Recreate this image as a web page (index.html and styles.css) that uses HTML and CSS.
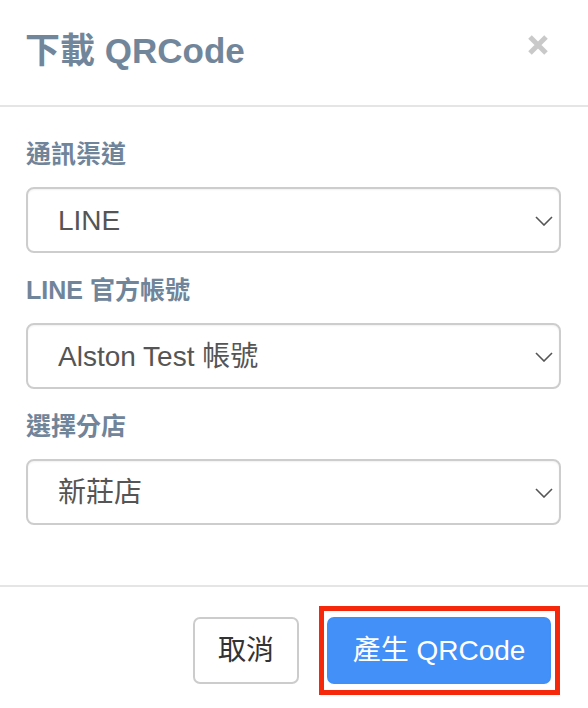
FILE: index.html
```html
<!DOCTYPE html>
<html lang="zh-Hant">
<head>
<meta charset="utf-8">
<title>下載 QRCode</title>
<link rel="stylesheet" href="styles.css">
</head>
<body>
<div class="modal">
  <div class="modal-header">
    <h4 class="modal-title">下載 QRCode</h4>
    <button class="close" type="button" aria-label="Close">
      <svg width="20" height="20" viewBox="0 0 20 20"><path d="M2 2 L18 18 M18 2 L2 18" stroke="#c9c9c9" stroke-width="5" fill="none"/></svg>
    </button>
  </div>
  <div class="modal-body">
    <div class="form-group">
      <label class="label">通訊渠道</label>
      <div class="select-wrap">
        <select class="form-control"><option>LINE</option></select>
        <svg class="chevron" width="18" height="10" viewBox="0 0 18 10"><path d="M1 1 L9 9 L17 1" stroke="#555" stroke-width="1.6" fill="none"/></svg>
      </div>
    </div>
    <div class="form-group">
      <label class="label">LINE 官方帳號</label>
      <div class="select-wrap">
        <select class="form-control"><option>Alston Test 帳號</option></select>
        <svg class="chevron" width="18" height="10" viewBox="0 0 18 10"><path d="M1 1 L9 9 L17 1" stroke="#555" stroke-width="1.6" fill="none"/></svg>
      </div>
    </div>
    <div class="form-group">
      <label class="label">選擇分店</label>
      <div class="select-wrap">
        <select class="form-control"><option>新莊店</option></select>
        <svg class="chevron" width="18" height="10" viewBox="0 0 18 10"><path d="M1 1 L9 9 L17 1" stroke="#555" stroke-width="1.6" fill="none"/></svg>
      </div>
    </div>
  </div>
  <div class="modal-footer">
    <button class="btn btn-default" type="button">取消</button>
    <button class="btn btn-primary" type="button">產生 QRCode</button>
  </div>
</div>
</body>
</html>
```

FILE: styles.css
```css
html, body {
  margin: 0;
  padding: 0;
  background: #fff;
}
body {
  font-family: "Liberation Sans", "Noto Sans CJK TC", sans-serif;
  color: #333;
}
.modal {
  width: 588px;
  height: 708px;
  overflow: hidden;
}
.modal-header {
  height: 105px;
  box-sizing: content-box;
  border-bottom: 2px solid #e5e5e5;
  padding: 0 40px 0 25px;
  display: flex;
  justify-content: space-between;
  align-items: center;
}
.modal-title {
  margin: 0;
  font-size: 35px;
  line-height: 40px;
  font-weight: bold;
  color: #72869b;
  margin-top: -3px;
}
.close {
  align-self: flex-start;
  margin-top: 35px;
  padding: 0;
  border: 0;
  background: none;
  width: 20px;
  height: 20px;
  display: block;
}
.close svg { display: block; }
.modal-body {
  padding: 32px 27px 0 26px;
  height: 478px;
  box-sizing: border-box;
}
.form-group {
  margin-bottom: 22px;
}
.label {
  display: block;
  font-size: 25px;
  line-height: 30px;
  font-weight: bold;
  color: #70849a;
  margin-bottom: 18px;
}
.select-wrap {
  position: relative;
}
.form-control {
  display: block;
  width: 100%;
  height: 66px;
  box-sizing: border-box;
  appearance: none;
  -webkit-appearance: none;
  border: 2px solid #cdcdcd;
  border-radius: 8px;
  background: #fff;
  padding: 0 50px 0 30px;
  font-family: "Liberation Sans", "Noto Sans CJK TC", sans-serif;
  font-size: 28px;
  color: #555;
  box-shadow: inset 0 1px 2px rgba(0,0,0,0.06);
}
.chevron {
  position: absolute;
  right: 8px;
  top: 29px;
}
.modal-footer {
  border-top: 2px solid #e5e5e5;
  padding: 30px 37px 0 0;
  display: flex;
  justify-content: flex-end;
  align-items: flex-start;
  gap: 28px;
}
.btn {
  height: 67px;
  box-sizing: border-box;
  border-radius: 7px;
  font-family: "Liberation Sans", "Noto Sans CJK TC", sans-serif;
  font-size: 28px;
  line-height: 1;
  padding: 0;
  display: flex;
  align-items: center;
  justify-content: center;
}
.btn-default {
  width: 106px;
  border: 2px solid #cccccc;
  background: #fff;
  color: #333;
}
.btn-primary {
  position: relative;
  width: 224px;
  border: 2px solid #4190f7;
  background: #4290f8;
  color: #fff;
}
.btn-primary::after {
  content: "";
  position: absolute;
  top: -13px;
  bottom: -13px;
  left: -10px;
  right: -11px;
  border: 5px solid #f5280c;
  pointer-events: none;
}
```
